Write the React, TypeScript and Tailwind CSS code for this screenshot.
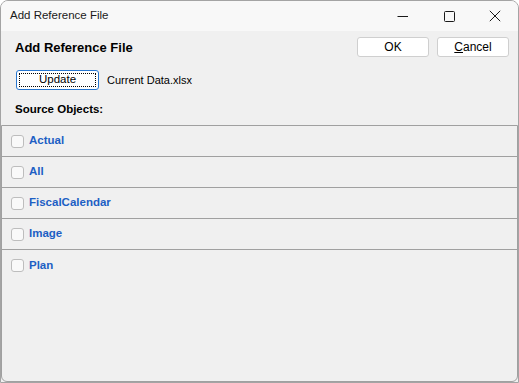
import React from "react";

const items = ["Actual", "All", "FiscalCalendar", "Image", "Plan"];

export default function App() {
  return (
    <div
      className="w-[519px] h-[383px] flex flex-col bg-[#f0f0f0] border border-[#a4a4a4] rounded-t-[8px] overflow-hidden text-[#000]"
      style={{ fontFamily: '"Liberation Sans", Arial, sans-serif' }}
    >
      {/* title bar */}
      <div className="h-[30px] shrink-0 flex items-center bg-[#f8f8f8] pl-[9px]">
        <span className="text-[11.5px] text-[#1a1a1a] mt-[-1px]">Add Reference File</span>
        <div className="ml-auto flex items-center h-full">
          <div className="w-[46px] h-full flex items-center justify-center">
            <svg width="12" height="12" viewBox="0 0 12 12">
              <line x1="0.5" y1="6.5" x2="11" y2="6.5" stroke="#1a1a1a" strokeWidth="1" />
            </svg>
          </div>
          <div className="w-[46px] h-full flex items-center justify-center">
            <svg width="11" height="11" viewBox="0 0 11 11">
              <rect x="0.5" y="0.5" width="10" height="10" rx="1" fill="none" stroke="#1a1a1a" strokeWidth="1" />
            </svg>
          </div>
          <div className="w-[46px] h-full flex items-center justify-center">
            <svg width="12" height="12" viewBox="0 0 12 12">
              <path d="M0.8 0.8 L11.2 11.2 M11.2 0.8 L0.8 11.2" stroke="#1a1a1a" strokeWidth="1" />
            </svg>
          </div>
        </div>
      </div>

      {/* header row */}
      <div className="mt-[6px] h-[20px] shrink-0 flex items-center pl-[14px] pr-[9px]">
        <span className="text-[13px] font-bold mt-[2px]">Add Reference File</span>
        <div className="ml-auto flex gap-[8px]">
          <button className="w-[72px] h-[20px] bg-white border border-[#cfcfcf] rounded-[3px] text-[12px] flex items-center justify-center">
            OK
          </button>
          <button className="w-[72px] h-[20px] bg-white border border-[#cfcfcf] rounded-[3px] text-[12px] flex items-center justify-center">
            <span className="underline">C</span>ancel
          </button>
        </div>
      </div>

      {/* update row */}
      <div className="mt-[13px] h-[20px] shrink-0 flex items-center pl-[15px]">
        <button className="relative w-[83px] h-[20px] bg-white border border-[#2877d0] rounded-[3px] text-[11.5px] flex items-center justify-center">
          <span className="absolute inset-[2px] border border-dotted border-black" />
          Update
        </button>
        <span className="ml-[8px] text-[11px]">Current Data.xlsx</span>
      </div>

      {/* source objects label */}
      <div className="mt-[10px] h-[20px] shrink-0 flex items-center pl-[14px]">
        <span className="text-[11.5px] font-bold">Source Objects:</span>
      </div>

      {/* list panel */}
      <div className="mt-[5px] flex-1 flex flex-col border border-[#a0a0a0] rounded-b-[6px]">
        {items.map((name, i) => (
          <div
            key={name}
            className={
              i < items.length - 1
                ? "h-[31px] flex items-center border-b border-[#a0a0a0] pl-[9px]"
                : "h-[31px] flex items-center pl-[9px]"
            }
          >
            <span className="w-[13px] h-[13px] rounded-[3px] border border-[#bdbdbd] bg-[#f9f9f9]" />
            <span className="ml-[5px] text-[11.5px] font-bold text-[#1d5fc4]">{name}</span>
          </div>
        ))}
      </div>
    </div>
  );
}
